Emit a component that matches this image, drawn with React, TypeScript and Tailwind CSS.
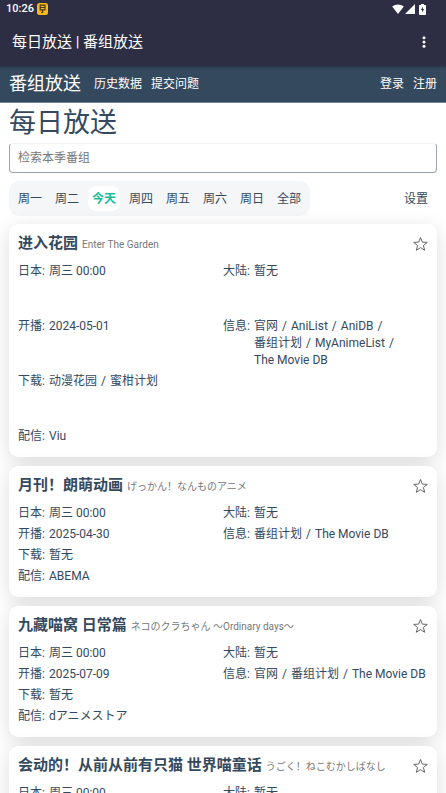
import { useState } from "react";

type Bangumi = {
  title: string;
  origin: string;
  jp: string;
  cn: string;
  begin: string;
  info: string[];
  download: string[];
  stream: string[];
};

const tabs = ["周一", "周二", "今天", "周四", "周五", "周六", "周日", "全部"];

const items: Bangumi[] = [
  {
    title: "进入花园",
    origin: "Enter The Garden",
    jp: "周三 00:00",
    cn: "暂无",
    begin: "2024-05-01",
    info: ["官网", "AniList", "AniDB", "番组计划", "MyAnimeList", "The Movie DB"],
    download: ["动漫花园", "蜜柑计划"],
    stream: ["Viu"],
  },
  {
    title: "月刊！朗萌动画",
    origin: "げっかん！なんものアニメ",
    jp: "周三 00:00",
    cn: "暂无",
    begin: "2025-04-30",
    info: ["番组计划", "The Movie DB"],
    download: [],
    stream: ["ABEMA"],
  },
  {
    title: "九藏喵窝 日常篇",
    origin: "ネコのクラちゃん ～Ordinary days～",
    jp: "周三 00:00",
    cn: "暂无",
    begin: "2025-07-09",
    info: ["官网", "番组计划", "The Movie DB"],
    download: [],
    stream: ["dアニメストア"],
  },
  {
    title: "会动的！从前从前有只猫 世界喵童话",
    origin: "うごく！ねこむかしばなし",
    jp: "周三 00:00",
    cn: "暂无",
    begin: "2025-07-09",
    info: ["官网", "番组计划"],
    download: [],
    stream: ["ABEMA"],
  },
];

function StatusBar() {
  return (
    <div className="flex h-[18px] items-center pl-[6px] pr-[20px] text-[11px] font-medium">
      <span>10:26</span>
      <svg className="ml-[3px] h-[12px] w-[11px]" viewBox="0 0 11 12">
        <rect width="11" height="12" rx="2.5" fill="#fcb813" />
        <path
          d="M3.200 2.200h4.800v4.600H3.200zM3.200 4.500h4.800M5.600 6.800v2.600H4"
          fill="none"
          stroke="#4a3a16"
          strokeWidth="1.2"
        />
      </svg>
      <div className="ml-auto flex items-center">
        <svg className="h-[10px] w-[12px]" viewBox="0 0 12 10" fill="#fff">
          <path d="M6 10 0.2 2.6C3.4-0.3 8.6-0.3 11.8 2.6z" />
        </svg>
        <svg className="ml-px h-[10px] w-[10px]" viewBox="0 0 10 10" fill="#fff">
          <path d="M10 0v10H0z" />
        </svg>
        <svg className="ml-1 h-[11px] w-[7px]" viewBox="0 0 7 11">
          <path
            d="M2 0h3v1h1.2q.8 0 .8.8v8.4q0 .8-.8.8H.8Q0 11 0 10.2V1.800Q0 1 .8 1H2z"
            fill="#fff"
          />
          <path d="M3.900 2.500 1.900 6h1.200v2.600L5.200 5.100H3.900z" fill="#2d2d43" />
        </svg>
      </div>
    </div>
  );
}

function Links({ list }: { list: string[] }) {
  if (!list.length) return <span>暂无</span>;
  return (
    <ul className="flex flex-wrap">
      {list.map((text, i) => (
        <li key={text} className="whitespace-nowrap">
          <a href="#">{text}</a>
          {i < list.length - 1 && <span className="mx-1">/</span>}
        </li>
      ))}
    </ul>
  );
}

function Field({
  label,
  wide,
  children,
}: {
  label: string;
  wide?: boolean;
  children: React.ReactNode;
}) {
  return (
    <div className={wide ? "col-span-2 flex" : "flex"}>
      <dt className="w-[31px] shrink-0">{label}:</dt>
      <dd className="min-w-0 flex-1">{children}</dd>
    </div>
  );
}

function Card({ item }: { item: Bangumi }) {
  return (
    <article className="rounded-[9px] bg-white px-[9px] pb-3 pt-[9px] shadow-[0_5px_20px_rgba(0,0,0,0.14)]">
      <div className="flex h-[22px] items-center">
        <h2 className="min-w-0 flex-1 truncate text-[15px] font-bold leading-[22px]">
          {item.title}
          <small className="ml-1 text-[10px] font-normal text-[#777]">
            {item.origin}
          </small>
        </h2>
        <button type="button" aria-label="收藏">
          <svg
            className="h-4 w-4"
            viewBox="0 0 16 16"
            fill="none"
            stroke="#666"
            strokeWidth="1"
          >
            <path d="M8.500 1.500 10.300 6.100l5 .3-3.900 3.100 1.300 4.800-4.200-2.700-4.200 2.700 1.300-4.800L1.700 6.400l5-.3z" />
          </svg>
        </button>
      </div>
      <dl className="mt-2 grid grid-cols-2 grid-rows-[1fr_1fr_1fr_auto] gap-y-1 text-xs leading-[17px]">
        <Field label="日本">{item.jp}</Field>
        <Field label="大陆">{item.cn}</Field>
        <Field label="开播">{item.begin}</Field>
        <Field label="信息">
          <Links list={item.info} />
        </Field>
        <Field label="下载" wide>
          <Links list={item.download} />
        </Field>
        <Field label="配信" wide>
          <Links list={item.stream} />
        </Field>
      </dl>
    </article>
  );
}

export default function App() {
  const [active, setActive] = useState("今天");

  return (
    <div
      lang="zh-CN"
      className="min-h-screen bg-white font-[Roboto,'Noto_Sans_CJK_SC',sans-serif] text-[#34495e]"
    >
      <div className="bg-[#2d2d43] text-white">
        <StatusBar />
        <div className="flex h-12 items-center justify-between px-3">
          <p className="text-[15px]">每日放送 | 番组放送</p>
          <button type="button" aria-label="更多" className="px-[8px]">
            <svg className="h-3 w-[4px]" viewBox="0 0 4 12" fill="#fff">
              <circle cx="2" cy="1.7" r="1.5" />
              <circle cx="2" cy="6" r="1.5" />
              <circle cx="2" cy="10.3" r="1.5" />
            </svg>
          </button>
        </div>
      </div>
      <nav className="flex h-[37px] items-center gap-[9px] border-b border-[#74828f] bg-[#34495e] px-[9px] text-xs text-white shadow-[inset_0_3px_3px_-2px_rgba(0,0,0,0.3)]">
        <a href="#" className="mr-1 text-lg">
          番组放送
        </a>
        <a href="#">历史数据</a>
        <a href="#" className="mr-auto">
          提交问题
        </a>
        <a href="#">登录</a>
        <a href="#">注册</a>
      </nav>
      <main className="px-[9px] pb-[9px]">
        <h1 className="text-[27px] leading-10">每日放送</h1>
        <input
          type="search"
          aria-label="检索本季番组"
          placeholder="检索本季番组"
          className="block h-[30px] w-full rounded-[4px] border border-[#9aa4af] border-t-[#f2f2f2] px-2 text-xs placeholder:text-[#777]"
        />
        <div className="mt-2 flex items-center justify-between">
          <div className="flex gap-[5px] rounded-[10px] bg-[#f4f6f7] p-[5px]">
            {tabs.map((tab) => (
              <button
                key={tab}
                type="button"
                onClick={() => setActive(tab)}
                className={
                  tab === active
                    ? "h-[25px] rounded-[8px] bg-white px-1 text-xs font-bold text-[#1abc9c]"
                    : "h-[25px] rounded-[8px] px-1 text-xs"
                }
              >
                {tab}
              </button>
            ))}
          </div>
          <button type="button" className="px-[9px] text-xs">
            设置
          </button>
        </div>
        <div className="mt-2 flex flex-col gap-[9px]">
          {items.map((item) => (
            <Card key={item.title} item={item} />
          ))}
        </div>
      </main>
    </div>
  );
}
